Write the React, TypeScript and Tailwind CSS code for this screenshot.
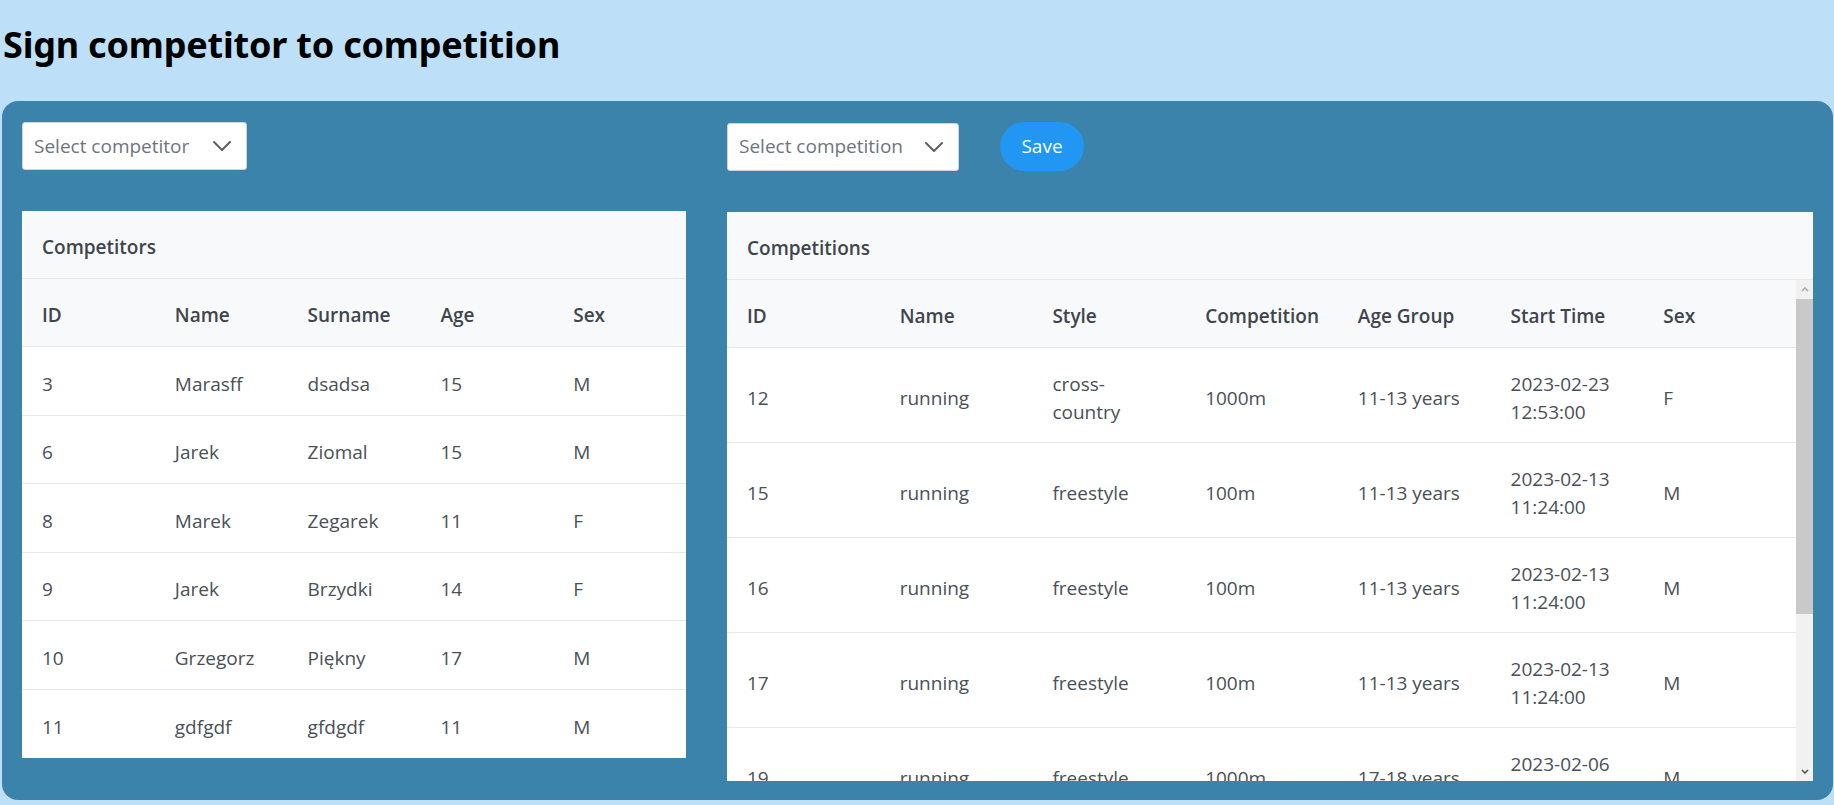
import React from "react";

type Competitor = { id: number; name: string; surname: string; age: number; sex: string };
type Competition = {
  id: number;
  name: string;
  style: string;
  distance: string;
  ageGroup: string;
  start: string;
  sex: string;
};

const competitors: Competitor[] = [
  { id: 3, name: "Marasff", surname: "dsadsa", age: 15, sex: "M" },
  { id: 6, name: "Jarek", surname: "Ziomal", age: 15, sex: "M" },
  { id: 8, name: "Marek", surname: "Zegarek", age: 11, sex: "F" },
  { id: 9, name: "Jarek", surname: "Brzydki", age: 14, sex: "F" },
  { id: 10, name: "Grzegorz", surname: "Piękny", age: 17, sex: "M" },
  { id: 11, name: "gdfgdf", surname: "gfdgdf", age: 11, sex: "M" },
];

const competitions: Competition[] = [
  { id: 12, name: "running", style: "cross-country", distance: "1000m", ageGroup: "11-13 years", start: "2023-02-23 12:53:00", sex: "F" },
  { id: 15, name: "running", style: "freestyle", distance: "100m", ageGroup: "11-13 years", start: "2023-02-13 11:24:00", sex: "M" },
  { id: 16, name: "running", style: "freestyle", distance: "100m", ageGroup: "11-13 years", start: "2023-02-13 11:24:00", sex: "M" },
  { id: 17, name: "running", style: "freestyle", distance: "100m", ageGroup: "11-13 years", start: "2023-02-13 11:24:00", sex: "M" },
  { id: 19, name: "running", style: "freestyle", distance: "1000m", ageGroup: "17-18 years", start: "2023-02-06 09:30:00", sex: "M" },
  { id: 20, name: "swimming", style: "freestyle", distance: "100m", ageGroup: "14-16 years", start: "2023-02-06 10:15:00", sex: "F" },
];

function Chevron() {
  return (
    <svg width="18" height="10" viewBox="0 0 18 10" fill="none">
      <path d="M1 1l8 8 8-8" stroke="#5b5f63" strokeWidth="2" strokeLinecap="round" strokeLinejoin="round" />
    </svg>
  );
}

function SelectBox({ label, width }: { label: string; width: string }) {
  return (
    <div
      className={`flex h-[48px] ${width} items-center justify-between rounded-[3px] border border-[#ced4da] bg-white pl-[11px] pr-[15px]`}
    >
      <span className="text-[19px] text-[#6c757d]">{label}</span>
      <Chevron />
    </div>
  );
}

function CardTitle({ children }: { children: React.ReactNode }) {
  return (
    <div className="flex h-[68px] items-center border-b border-[#e6e8ea] bg-[#f8f9fa] pl-5 pt-[6px] text-[19px] font-semibold text-[#3e454c]">
      {children}
    </div>
  );
}

function Scrollbar() {
  return (
    <div className="flex w-[17px] flex-col bg-[#f1f1f1]">
      <div className="flex h-[19px] items-center justify-center">
        <svg width="8" height="5" viewBox="0 0 8 5">
          <path d="M1 4l3-3 3 3" stroke="#a8a8a8" strokeWidth="1.5" fill="none" />
        </svg>
      </div>
      <div className="h-[315px] bg-[#c9c9c9]" />
      <div className="flex-1" />
      <div className="flex h-[19px] items-center justify-center">
        <svg width="8" height="5" viewBox="0 0 8 5">
          <path d="M1 1l3 3 3-3" stroke="#505050" strokeWidth="1.5" fill="none" />
        </svg>
      </div>
    </div>
  );
}

export default function App() {
  return (
    <div className="min-h-screen bg-[#bde0f8] font-['Open_Sans',sans-serif]">
      <h1 className="h-[101px] pl-[3px] pt-[23px] font-['Noto_Sans',sans-serif] text-[36px] font-bold leading-[44px] tracking-[-0.2px] text-black">
        Sign competitor to competition
      </h1>

      <div className="ml-[2px] mr-[1px] rounded-2xl bg-[#3b83ab] px-5 pb-[19px] pt-[21px]">
        <div className="grid grid-cols-[664px_1fr] gap-x-[41px]">
          {/* competitors */}
          <div>
            <SelectBox label="Select competitor" width="w-[225px]" />
            <div className="mt-[41px] bg-white">
              <CardTitle>Competitors</CardTitle>
              <div className="grid h-[68px] grid-cols-5 items-center border-b border-[#e6e8ea] bg-[#f8f9fa] pt-[6px] text-[19px] font-semibold text-[#3e454c]">
                {["ID", "Name", "Surname", "Age", "Sex"].map((h) => (
                  <div key={h} className="pl-5">
                    {h}
                  </div>
                ))}
              </div>
              {competitors.map((c, i) => (
                <div
                  key={c.id}
                  className={`grid h-[68.5px] grid-cols-5 items-center pt-[6px] text-[19px] text-[#495057] ${
                    i < competitors.length - 1 ? "border-b border-[#e6e8ea]" : ""
                  }`}
                >
                  <div className="pl-5">{c.id}</div>
                  <div className="pl-5">{c.name}</div>
                  <div className="pl-5">{c.surname}</div>
                  <div className="pl-5">{c.age}</div>
                  <div className="pl-5">{c.sex}</div>
                </div>
              ))}
            </div>
          </div>

          {/* competitions */}
          <div>
            <div className="flex items-center gap-[41px]">
              <SelectBox label="Select competition" width="w-[232px]" />
              <button className="h-[49px] w-[84px] rounded-full bg-[#2196f3] text-[19px] font-medium text-white">
                Save
              </button>
            </div>
            <div className="mt-[41px] bg-white">
              <CardTitle>Competitions</CardTitle>
              <div className="flex h-[501px]">
                <div className="flex-1 overflow-hidden">
                  <div className="grid h-[68px] grid-cols-7 items-center border-b border-[#e6e8ea] bg-[#f8f9fa] pt-[6px] text-[19px] font-semibold text-[#3e454c]">
                    {["ID", "Name", "Style", "Competition", "Age Group", "Start Time", "Sex"].map((h) => (
                      <div key={h} className="pl-5">
                        {h}
                      </div>
                    ))}
                  </div>
                  {competitions.map((c) => {
                    const [date, time] = c.start.split(" ");
                    return (
                      <div
                        key={c.id}
                        className="grid h-[95px] shrink-0 grid-cols-7 items-center border-b border-[#e6e8ea] pt-[6px] text-[19px] leading-[28px] text-[#495057]"
                      >
                        <div className="pl-5">{c.id}</div>
                        <div className="pl-5">{c.name}</div>
                        <div className="pl-5 pr-5">{c.style}</div>
                        <div className="pl-5">{c.distance}</div>
                        <div className="pl-5">{c.ageGroup}</div>
                        <div className="pl-5">
                          <div>{date}</div>
                          <div>{time}</div>
                        </div>
                        <div className="pl-5">{c.sex}</div>
                      </div>
                    );
                  })}
                </div>
                <Scrollbar />
              </div>
            </div>
          </div>
        </div>
      </div>
    </div>
  );
}
